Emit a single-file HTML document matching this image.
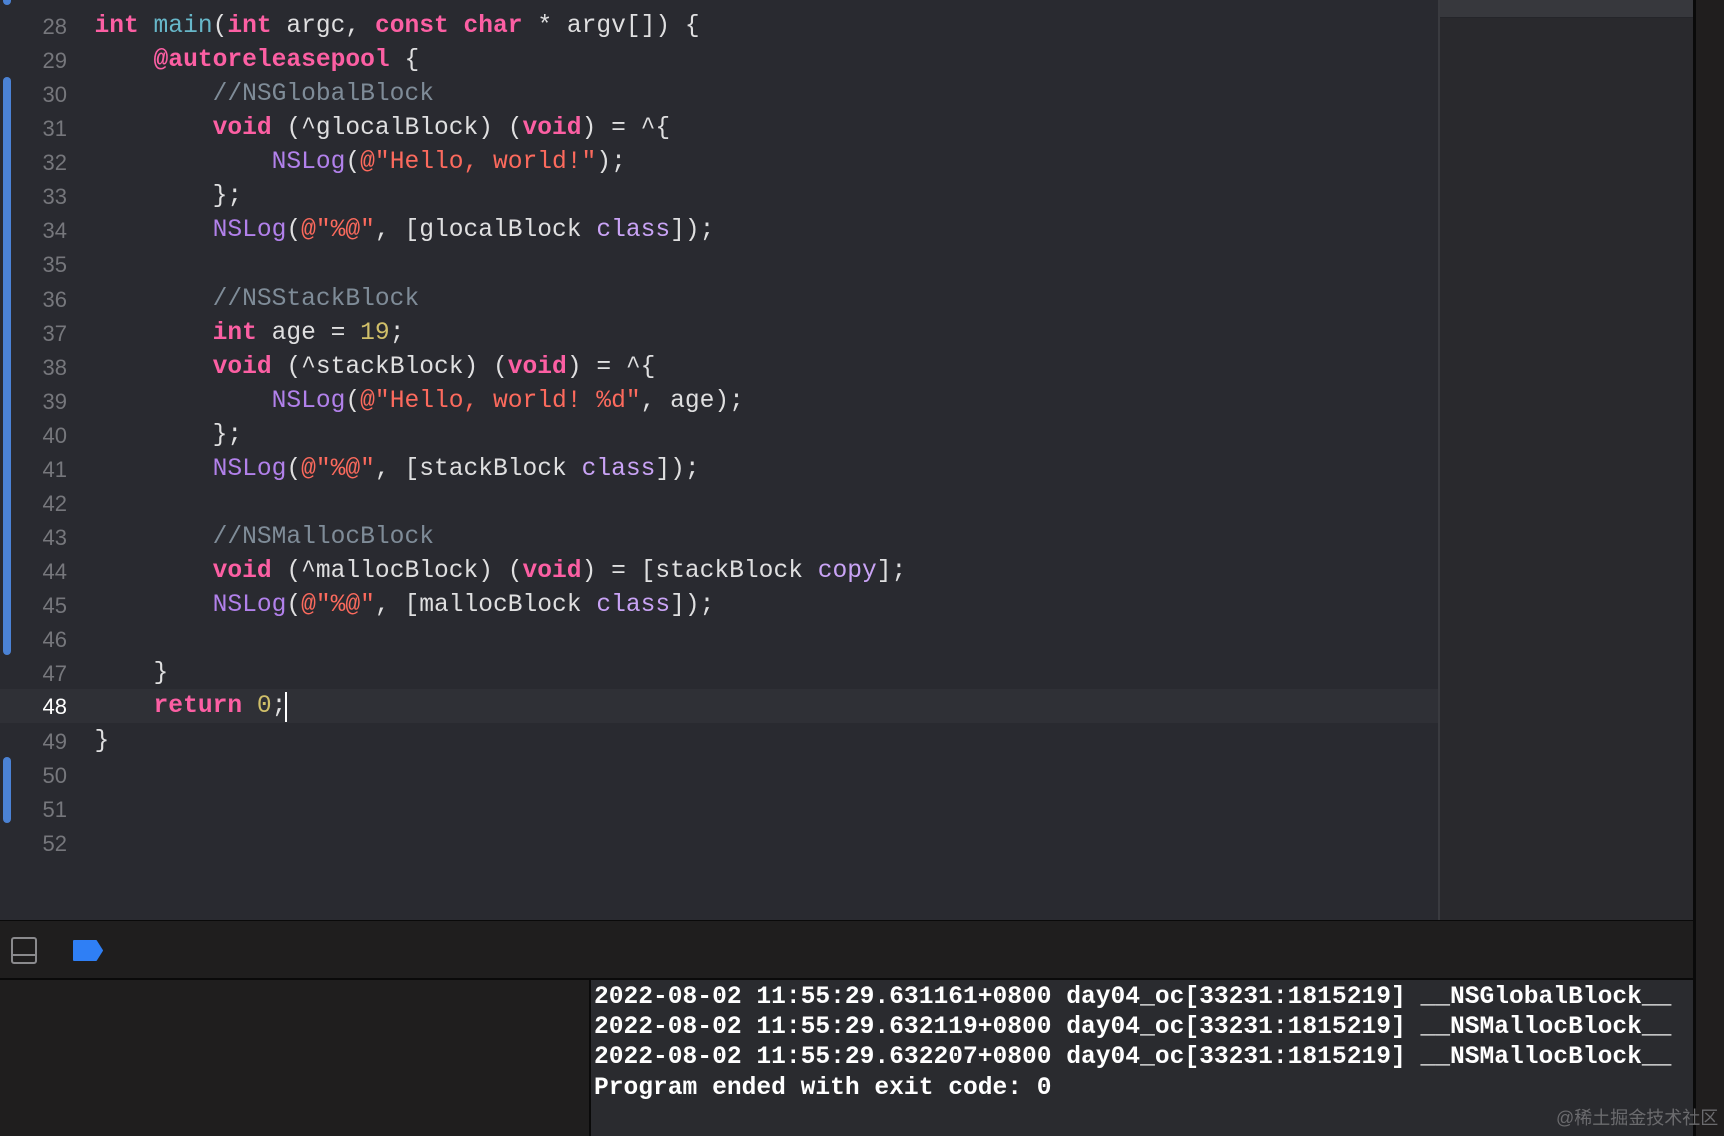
<!DOCTYPE html>
<html><head><meta charset="utf-8"><style>
html,body{margin:0;padding:0}
body{width:1724px;height:1136px;position:relative;overflow:hidden;background:#292a30;font-family:"Liberation Mono",monospace}
.ed{position:absolute;left:0;top:0;width:1438px;height:920px;background:#292a30}
.mm{position:absolute;left:1438px;top:0;width:256px;height:920px;background:#29292d;border-left:2px solid #3a3b40;box-sizing:border-box}
.mmt{position:absolute;left:1440px;top:0;width:254px;height:17px;background:#37383d;border-bottom:1px solid #24252a}
.rb{position:absolute;left:1693px;top:0;width:3px;height:1136px;background:#0a0a0a}
.rr{position:absolute;left:1696px;top:0;width:28px;height:1136px;background:#201e1e}
.cur{position:absolute;left:0;top:689px;width:1438px;height:34px;background:#2f3036}
.bar{position:absolute;left:3px;width:8px;background:#4b82d4;border-radius:4px}
.ln{position:absolute;left:0;width:67px;text-align:right;font-size:22px;color:#76777c;line-height:34px;font-family:"Liberation Sans",sans-serif}
.cl{position:absolute;left:94.5px;font-size:24.6px;line-height:34px;color:#dfdfe0;white-space:pre}
.k{color:#fc5fa3;font-weight:bold}.f{color:#67b7c9}.c{color:#7f8c98}.s{color:#fc6a5d}.n{color:#d0bf69}.p{color:#b281eb}.m{color:#c9a3f5}
.tb{position:absolute;left:0;top:920px;width:1693px;height:57px;background:#1f1e1e;border-top:1px solid #0a0a0a;border-bottom:2px solid #0a0a0a}
.cl1{position:absolute;left:0;top:980px;width:589px;height:156px;background:#1f1e1e}
.cr{position:absolute;left:589px;top:980px;width:1104px;height:156px;background:#2a2b2f;border-left:2px solid #0a0a0a}
.con{position:absolute;left:594px;font-size:24.6px;font-weight:bold;color:#fff;white-space:pre;line-height:30px}
.wm{position:absolute;left:1556px;top:1104px;font-family:"Liberation Sans","Noto Sans CJK SC",sans-serif;font-size:18px;color:#6b6b6e;white-space:nowrap}
</style></head><body>
<div class="ed"></div>
<div class="mm"></div><div class="mmt"></div>
<div class="cur"></div>
<div class="bar" style="top:-4px;height:9px"></div>
<div class="bar" style="top:77px;height:578px"></div>
<div class="bar" style="top:757px;height:66px"></div>

<div class="ln" style="top:10px">28</div>
<div class="ln" style="top:44px">29</div>
<div class="ln" style="top:78px">30</div>
<div class="ln" style="top:112px">31</div>
<div class="ln" style="top:146px">32</div>
<div class="ln" style="top:180px">33</div>
<div class="ln" style="top:214px">34</div>
<div class="ln" style="top:248px">35</div>
<div class="ln" style="top:283px">36</div>
<div class="ln" style="top:317px">37</div>
<div class="ln" style="top:351px">38</div>
<div class="ln" style="top:385px">39</div>
<div class="ln" style="top:419px">40</div>
<div class="ln" style="top:453px">41</div>
<div class="ln" style="top:487px">42</div>
<div class="ln" style="top:521px">43</div>
<div class="ln" style="top:555px">44</div>
<div class="ln" style="top:589px">45</div>
<div class="ln" style="top:623px">46</div>
<div class="ln" style="top:657px">47</div>
<div class="ln" style="top:690px;color:#fff">48</div>
<div class="ln" style="top:725px">49</div>
<div class="ln" style="top:759px">50</div>
<div class="ln" style="top:793px">51</div>
<div class="ln" style="top:827px">52</div>

<div class="cl" style="top:10px"><span class="k">int</span> <span class="f">main</span>(<span class="k">int</span> argc, <span class="k">const</span> <span class="k">char</span> * argv[]) {</div>
<div class="cl" style="top:44px">    <span class="k">@autoreleasepool</span> {</div>
<div class="cl" style="top:78px">        <span class="c">//NSGlobalBlock</span></div>
<div class="cl" style="top:112px">        <span class="k">void</span> (^glocalBlock) (<span class="k">void</span>) = ^{</div>
<div class="cl" style="top:146px">            <span class="p">NSLog</span>(<span class="s">@"Hello, world!"</span>);</div>
<div class="cl" style="top:180px">        };</div>
<div class="cl" style="top:214px">        <span class="p">NSLog</span>(<span class="s">@"%@"</span>, [glocalBlock <span class="m">class</span>]);</div>
<div class="cl" style="top:283px">        <span class="c">//NSStackBlock</span></div>
<div class="cl" style="top:317px">        <span class="k">int</span> age = <span class="n">19</span>;</div>
<div class="cl" style="top:351px">        <span class="k">void</span> (^stackBlock) (<span class="k">void</span>) = ^{</div>
<div class="cl" style="top:385px">            <span class="p">NSLog</span>(<span class="s">@"Hello, world! %d"</span>, age);</div>
<div class="cl" style="top:419px">        };</div>
<div class="cl" style="top:453px">        <span class="p">NSLog</span>(<span class="s">@"%@"</span>, [stackBlock <span class="m">class</span>]);</div>
<div class="cl" style="top:521px">        <span class="c">//NSMallocBlock</span></div>
<div class="cl" style="top:555px">        <span class="k">void</span> (^mallocBlock) (<span class="k">void</span>) = [stackBlock <span class="m">copy</span>];</div>
<div class="cl" style="top:589px">        <span class="p">NSLog</span>(<span class="s">@"%@"</span>, [mallocBlock <span class="m">class</span>]);</div>
<div class="cl" style="top:657px">    }</div>
<div class="cl" style="top:690px">    <span class="k">return</span> <span class="n">0</span>;</div>
<div style="position:absolute;left:285px;top:692px;width:2px;height:30px;background:#fff"></div>
<div class="cl" style="top:725px">}</div>

<div class="tb"></div>
<svg style="position:absolute;left:10px;top:936px" width="30" height="30"><rect x="2" y="2" width="24" height="25" rx="2" fill="none" stroke="#8a8a8d" stroke-width="2"/><line x1="2" y1="19" x2="26" y2="19" stroke="#8a8a8d" stroke-width="2"/></svg>
<svg style="position:absolute;left:72px;top:939px" width="34" height="24"><path d="M2 2 H24 L30 11.5 L24 21 H2 Z" fill="#2f7ff5" stroke="#2f7ff5" stroke-linejoin="round" stroke-width="2"/></svg>
<div class="cl1"></div>
<div class="cr"></div>
<div class="con" style="top:983px">2022-08-02 11:55:29.631161+0800 day04_oc[33231:1815219] __NSGlobalBlock__</div>
<div class="con" style="top:1013px">2022-08-02 11:55:29.632119+0800 day04_oc[33231:1815219] __NSMallocBlock__</div>
<div class="con" style="top:1043px">2022-08-02 11:55:29.632207+0800 day04_oc[33231:1815219] __NSMallocBlock__</div>
<div class="con" style="top:1074px">Program ended with exit code: 0</div>
<div class="rb"></div><div class="rr"></div>
<div class="wm">@稀土掘金技术社区</div>
</body></html>
